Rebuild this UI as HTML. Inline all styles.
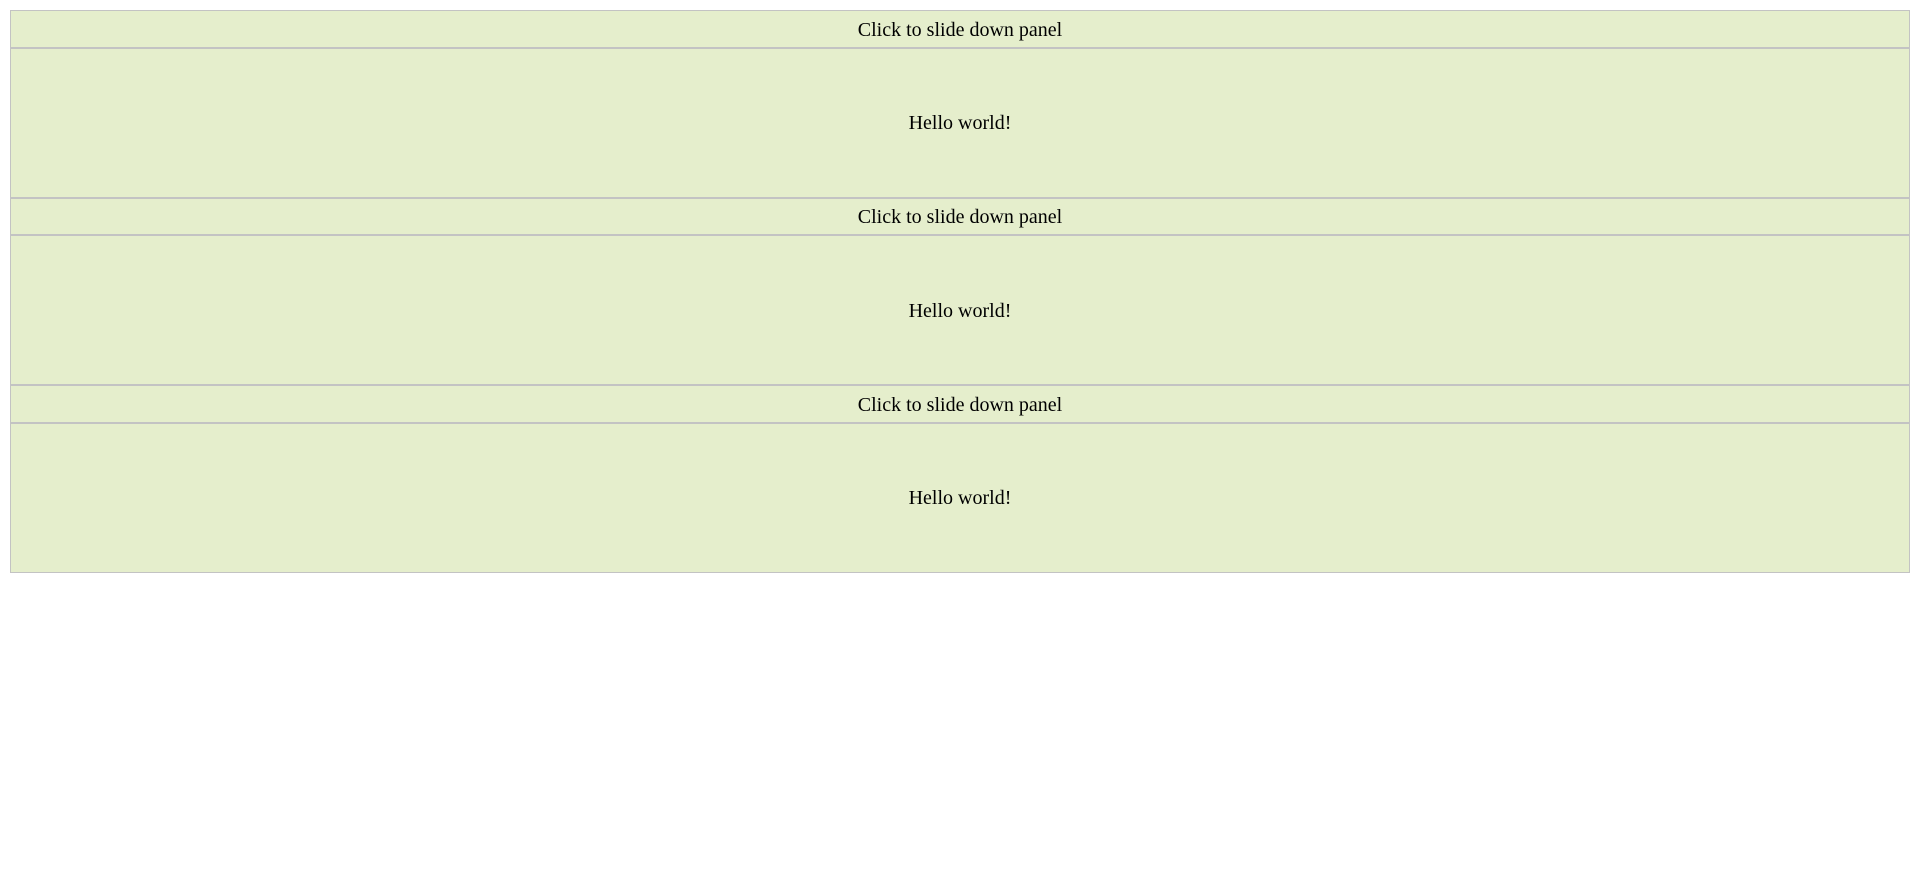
<!DOCTYPE html>
<html><head><style>
html,body{margin:0;padding:0;background:#fff}
body{margin:10px;font-family:"Liberation Serif",serif;font-size:20px}
.flip,.panel{padding:7.5px 6.25px 5px;text-align:center;background:#e5eecc;border:1.25px solid #c3c3c3;line-height:23px}
.panel{padding:63.75px 6.25px 61.25px}
</style></head><body>
<div class="flip">Click to slide down panel</div>
<div class="panel">Hello world!</div>
<div class="flip">Click to slide down panel</div>
<div class="panel">Hello world!</div>
<div class="flip">Click to slide down panel</div>
<div class="panel">Hello world!</div>
</body></html>
